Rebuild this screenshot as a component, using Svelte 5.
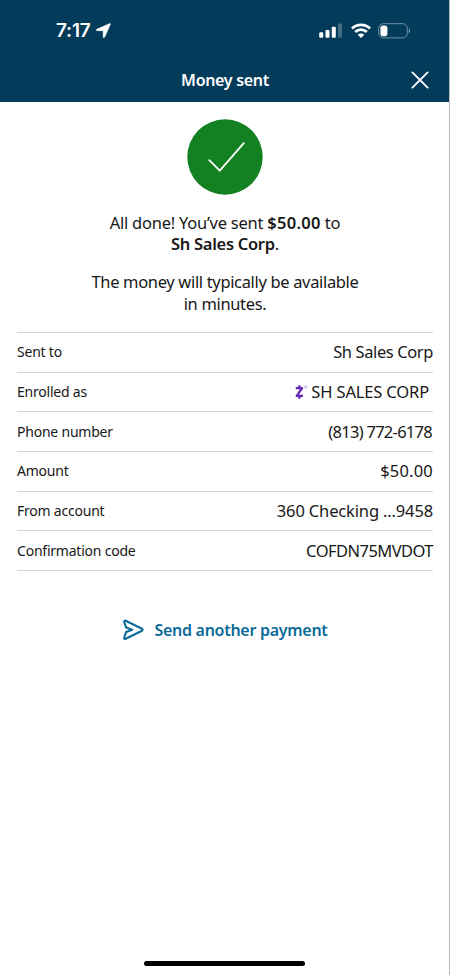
<script lang="ts">
	const details = [
		{ id: 'recipient', label: 'Sent to', value: 'Sh Sales Corp' },
		{ id: 'enrolled', label: 'Enrolled as', value: 'SH SALES CORP', zelle: true },
		{ id: 'phone', label: 'Phone number', value: '(813) 772-6178' },
		{ id: 'amount', label: 'Amount', value: '$50.00' },
		{ id: 'account', label: 'From account', value: '360 Checking ...9458' },
		{ id: 'code', label: 'Confirmation code', value: 'COFDN75MVDOT' }
	];
</script>

<div class="screen">
	<header>
		<div class="status">
			<div class="clock">
				<span>7:17</span>
				<svg width="15" height="15" viewBox="0 0 15 15" aria-hidden="true">
					<path
						d="M13.7.6.8 6.2c-.9.4-.7 1.5.3 1.5h5.6c.3 0 .4.1.4.4v5.7c0 1 1.2 1.2 1.6.3L14.4 1.3c.2-.5-.2-.9-.7-.7z"
						fill="#fff"
						stroke="#fff"
						stroke-width="0.5"
					/>
				</svg>
			</div>
			<div class="indicators">
				<svg width="24" height="16" viewBox="0 0 24 16" aria-hidden="true">
					<g fill="#fff">
						<rect x="0.2" y="9.2" width="4" height="5.6" rx="1.1" />
						<rect x="6.5" y="7" width="4" height="7.8" rx="1.1" />
						<rect x="12.8" y="3.7" width="4" height="11.1" rx="1.1" />
						<rect x="19" y="0.4" width="4" height="14.4" rx="1.1" opacity="0.25" />
					</g>
				</svg>
				<svg width="20" height="16" viewBox="0 0 20 16" aria-hidden="true">
					<g fill="none" stroke="#fff" stroke-width="2.8">
						<path d="M1 5.5a12.8 12.8 0 0 1 18 0" />
						<path d="M4.2 9a8.2 8.2 0 0 1 11.6 0" />
					</g>
					<path d="M10 15 6.7 11.8a4.7 4.7 0 0 1 6.6 0z" fill="#fff" />
				</svg>
				<svg width="33" height="16" viewBox="0 0 33 16" aria-hidden="true">
					<rect
						x="0.7"
						y="0.7"
						width="28.6"
						height="14.2"
						rx="4.6"
						fill="none"
						stroke="#6f93aa"
						stroke-width="1"
					/>
					<rect x="2.4" y="2.4" width="7" height="10.8" rx="2.8" fill="#fff" />
					<path d="M30.6 5.5c2 .7 2 3.9 0 4.6z" fill="#6f93aa" />
				</svg>
			</div>
		</div>
		<div class="titlebar">
			<h1>Money sent</h1>
			<button class="close" type="button" aria-label="Close">
				<svg width="18" height="18" viewBox="0 0 18 18">
					<path
						d="m1.4 1.4 15.2 15.2M16.6 1.4 1.4 16.6"
						stroke="#fff"
						stroke-width="1.9"
						stroke-linecap="round"
					/>
				</svg>
			</button>
		</div>
	</header>

	<main>
		<svg class="success" width="76" height="76" viewBox="0 0 76 76" aria-hidden="true">
			<circle cx="38" cy="38" r="37.7" fill="#138021" />
			<path
				d="m22.2 41.2 10.6 10.5L56.8 24.2"
				fill="none"
				stroke="#fff"
				stroke-width="1.8"
				stroke-linecap="round"
				stroke-linejoin="round"
			/>
		</svg>

		<p class="message">
			All done! You’ve sent <strong class="sum">$50.00</strong> to<br />
			<strong>Sh Sales Corp</strong>.
		</p>
		<p class="message timing">The money will typically be available<br />in minutes.</p>

		<dl>
			{#each details as row (row.id)}
				<div class="row">
					<dt>{row.label}</dt>
					<dd class="value-{row.id}">
						{#if row.zelle}
							<svg width="13" height="14" viewBox="0 0 13 14" aria-hidden="true">
								<path
									d="M.8 3.2h7.2M.8 10.8h7.2M6.6 3.6 2.2 10.4M4.4 3V.2M4.4 13.8V11"
									fill="none"
									stroke="#6526b5"
									stroke-width="2.2"
								/>
								<circle cx="10.8" cy="2" r="1.5" fill="#e3d6f3" stroke="#c3aae3" stroke-width="0.5" />
							</svg>
						{/if}
						<span>{row.value}</span>
					</dd>
				</div>
			{/each}
		</dl>

		<button class="again" type="button">
			<svg width="22" height="22" viewBox="0 0 22 22" aria-hidden="true">
				<path
					d="M2.2 3c-.3-1 .5-1.8 1.5-1.3L20 9.8c.9.5.9 1.4 0 1.9L3.7 19.8c-1 .5-1.8-.3-1.5-1.3l1.9-5.4 6.2-2.4-6.2-2.3z"
					fill="none"
					stroke="#0b6b99"
					stroke-width="2.1"
					stroke-linejoin="round"
				/>
			</svg>
			<span>Send another payment</span>
		</button>
	</main>

	<div class="home-indicator"></div>
</div>

<style>
	:global(body) {
		margin: 0;
		background: #fff;
	}

	.screen {
		box-sizing: border-box;
		display: flex;
		flex-direction: column;
		width: 450px;
		height: 975px;
		overflow: hidden;
		border-right: 1px solid #b8babc;
		background: #fff;
		color: #181818;
		font-family: 'Noto Sans', 'Open Sans', sans-serif;
	}

	header {
		box-sizing: border-box;
		flex: none;
		width: 450px;
		height: 102px;
		background: #033b5a;
		color: #fff;
	}

	.status {
		display: flex;
		align-items: center;
		justify-content: space-between;
		height: 57px;
		padding: 4px 39px 0 56px;
		box-sizing: border-box;
	}

	.clock {
		display: flex;
		align-items: center;
		gap: 5px;
		font: 600 19px/20px Inter, sans-serif;
		letter-spacing: -0.2px;
	}

	.indicators {
		display: flex;
		align-items: center;
		gap: 7px;
	}

	.indicators svg:first-child {
		margin-right: 1px;
	}

	.titlebar {
		display: grid;
		grid-template-columns: 40px 1fr 40px;
		align-items: center;
		padding: 0 10px;
		height: 45px;
	}

	h1 {
		grid-column: 2;
		margin: 0;
		text-align: center;
		font-size: 16px;
		font-weight: 600;
		line-height: 22px;
		letter-spacing: -0.3px;
	}

	button {
		padding: 0;
		border: 0;
		background: none;
		font-family: inherit;
		cursor: pointer;
	}

	.close {
		display: grid;
		place-items: center;
		height: 40px;
	}

	main {
		display: flex;
		flex: 1;
		flex-direction: column;
		align-items: center;
		padding: 17px 16px 0 17px;
	}

	.success {
		display: block;
		flex: none;
	}

	.message {
		margin: 16.5px 0 0;
		text-align: center;
		font-size: 16.5px;
		line-height: 21.5px;
		letter-spacing: -0.25px;
		white-space: nowrap;
	}

	.timing {
		letter-spacing: -0.34px;
	}

	strong {
		font-weight: 600;
		letter-spacing: -0.3px;
	}

	.sum {
		letter-spacing: 0.3px;
	}

	dl {
		width: 100%;
		margin: 18px 0 0;
		border-top: 1px solid #d5d5d5;
	}

	.row {
		box-sizing: border-box;
		display: flex;
		align-items: center;
		justify-content: space-between;
		height: 39.7px;
		border-bottom: 1px solid #d5d5d5;
	}

	dt {
		font-size: 14px;
		line-height: 20px;
		letter-spacing: -0.22px;
	}

	dd {
		display: flex;
		align-items: center;
		gap: 3px;
		margin: 0;
		font-size: 16.5px;
		line-height: 22px;
		letter-spacing: -0.15px;
	}

	.value-recipient {
		letter-spacing: -0.4px;
	}

	.value-enrolled {
		padding-right: 4px;
	}

	.value-phone {
		padding-right: 1px;
		letter-spacing: -0.73px;
	}

	.value-amount {
		letter-spacing: 0.2px;
	}

	.value-code {
		letter-spacing: -0.55px;
	}

	.again {
		display: flex;
		align-items: center;
		gap: 10px;
		margin-top: 48px;
		color: #0b6b99;
		font-size: 16px;
		font-weight: 600;
		line-height: 22px;
		letter-spacing: -0.28px;
	}

	.home-indicator {
		flex: none;
		align-self: center;
		width: 161px;
		height: 5px;
		margin-bottom: 9px;
		border-radius: 3px;
		background: #000;
	}
</style>
